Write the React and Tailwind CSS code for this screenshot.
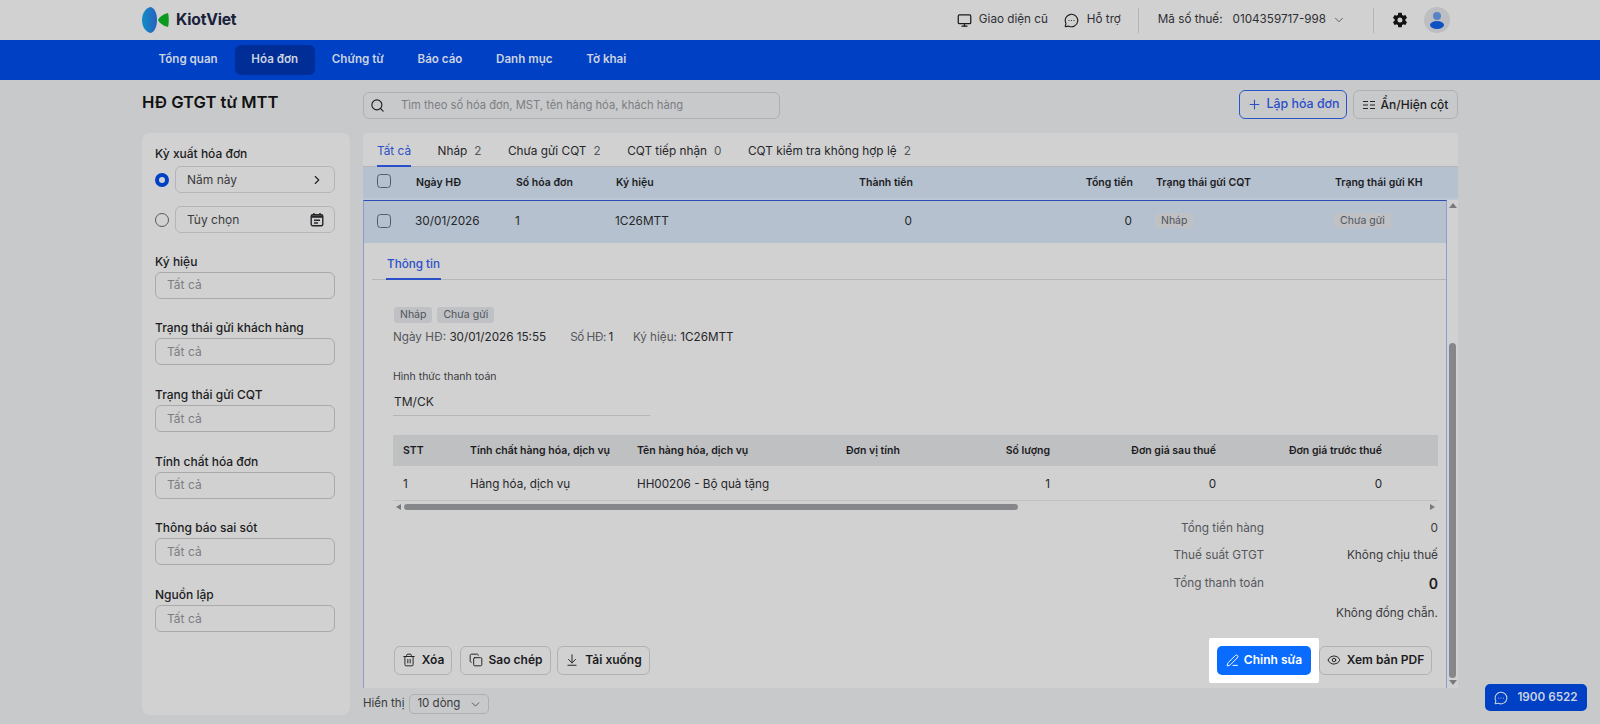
import { Monitor, MessageCircleMore, ChevronDown, ChevronRight, Search, Plus, Trash2, Copy, ArrowDownToLine, PenLine, Eye } from "lucide-react";
import { IoSettingsSharp } from "react-icons/io5";

const navItems = ["Tổng quan", "Hóa đơn", "Chứng từ", "Báo cáo", "Danh mục", "Tờ khai"];
const tabs = [
  { label: "Nháp", count: 2 },
  { label: "Chưa gửi CQT", count: 2 },
  { label: "CQT tiếp nhận", count: 0 },
  { label: "CQT kiểm tra không hợp lệ", count: 2 },
];
const filters = ["Ký hiệu", "Trạng thái gửi khách hàng", "Trạng thái gửi CQT", "Tính chất hóa đơn", "Thông báo sai sót", "Nguồn lập"];
const totals = [
  { label: "Tổng tiền hàng", value: "0" },
  { label: "Thuế suất GTGT", value: "Không chịu thuế" },
  { label: "Tổng thanh toán", value: "0", strong: true },
];

function Logo() {
  return (
    <svg width="28" height="28" viewBox="0 0 28 28" className="shrink-0">
      <defs>
        <linearGradient id="kv" x1="0" x2="1" y1="0" y2="0">
          <stop offset="0" stopColor="#0f8fc4" />
          <stop offset="1" stopColor="#2a5fc0" />
        </linearGradient>
      </defs>
      <path d="M9 1 C3 2 0 8 0 14 C0 20 3 26 9 27 C14 25 15 18 15 14 C15 10 14 3 9 1 Z" fill="url(#kv)" />
      <path d="M26 7 C27 10 27 18 26 21 C22 20 17 17 16 14 C17 11 22 8 26 7 Z" fill="#0a9a1e" />
    </svg>
  );
}

function ColumnsIcon() {
  return (
    <svg width="12" height="10" viewBox="0 0 12 10" fill="none" stroke="#26272a" strokeWidth="1">
      <path d="M0 1.5H5M7 1.5H12M0 5H5M7 5H12M0 8.5H5M7 8.5H12" />
    </svg>
  );
}

function CalendarIcon() {
  return (
    <svg width="14" height="15" viewBox="0 0 14 15" fill="none" stroke="#26272a" strokeWidth="1.4">
      <rect x="1.2" y="2.7" width="11.6" height="11" rx="1.5" />
      <path d="M1.2 4.6H12.8" strokeWidth="2.4" />
      <path d="M4 1V3M10 1V3M4 8.2H10M4 11H8" />
    </svg>
  );
}

function Checkbox() {
  return <span className="-mt-[3px] block h-[14px] w-[14px] rounded-[3.5px] border border-[#555b66]" />;
}

function Tag({ children, className = "" }) {
  return <span className={`rounded-[3px] bg-[#bfc1c4] px-[6px] py-[1px] text-[10.5px] leading-[14px] text-[#50545c] ${className}`}>{children}</span>;
}

function OutlineButton({ icon: Icon, children, className = "" }) {
  return (
    <button type="button" className={`flex h-[29px] items-center justify-center gap-[6px] rounded-[6px] border border-[#b0b1b3] text-[12px] font-semibold text-[#1c1c1e] ${className}`}>
      <Icon size={14} strokeWidth={1.6} />
      {children}
    </button>
  );
}

function Sidebar() {
  return (
    <aside className="flex h-[582px] w-[208px] shrink-0 flex-col rounded-[8px] bg-[#d1d1d1] pl-[13px] pr-[15px] pt-[14px]">
      <div className="text-[12px] font-medium leading-[14px] text-[#1c1c1e]">Kỳ xuất hóa đơn</div>
      <div className="mt-[5px] flex items-center gap-[6px]">
        <span className="h-[14px] w-[14px] rounded-full border-[4px] border-[#0040c4] bg-[#d1d1d1]" />
        <div className="flex h-[27px] flex-1 items-center justify-between rounded-[6px] border border-[#b4b5b7] pl-[11px] pr-[10px] text-[12px] text-[#3a3b3e]">
          Năm này
          <ChevronRight size={14} strokeWidth={2} className="text-[#26272a]" />
        </div>
      </div>
      <div className="mt-[13px] flex items-center gap-[6px]">
        <span className="h-[14px] w-[14px] rounded-full border border-[#55585e]" />
        <div className="flex h-[27px] flex-1 items-center justify-between rounded-[6px] border border-[#b4b5b7] pl-[11px] pr-[10px] text-[12px] text-[#3a3b3e]">
          Tùy chọn
          <CalendarIcon />
        </div>
      </div>
      <div className="-mt-[1px] flex flex-col">
        {filters.map((label) => (
          <div key={label} className="mt-[21.7px]">
            <div className="text-[12px] font-medium leading-[16px] text-[#1c1c1e]">{label}</div>
            <div className="mt-[2px] flex h-[27px] items-center rounded-[6px] border border-[#a9aaac] pl-[11px] text-[12px] text-[#7c7e83]">Tất cả</div>
          </div>
        ))}
      </div>
    </aside>
  );
}

function Tabs() {
  return (
    <div className="flex h-[34px] shrink-0 items-stretch gap-[26.5px] border-b border-[#b4b5b7] pl-[14px] text-[11.8px] leading-[36px] text-[#26272a]">
      <span className="-mb-px border-b-2 border-[#2a4fc8] text-[#2a4fc8]">Tất cả</span>
      {tabs.map((t) => (
        <span key={t.label} className="whitespace-nowrap">
          {t.label}
          <span className="ml-[7px] text-[#55575c]">{t.count}</span>
        </span>
      ))}
    </div>
  );
}

function InvoiceTable() {
  return (
    <div className="mt-[19px] w-[1045px]">
      <div className="grid h-[31px] grid-cols-[67px_167px_209px_89px_115px_166px_1fr] items-center bg-[#bfc0c2] pl-[10px] text-[10.5px] font-semibold text-[#1c1c1e]">
        <span>STT</span>
        <span>Tính chất hàng hóa, dịch vụ</span>
        <span>Tên hàng hóa, dịch vụ</span>
        <span>Đơn vị tính</span>
        <span className="text-right">Số lượng</span>
        <span className="text-right">Đơn giá sau thuế</span>
        <span className="pr-[56px] text-right">Đơn giá trước thuế</span>
      </div>
      <div className="grid h-[35px] grid-cols-[67px_167px_209px_89px_115px_166px_1fr] items-center border-b border-[#c0c1c3] pl-[10px] pt-[3px] text-[11.7px] text-[#26272a]">
        <span>1</span>
        <span>Hàng hóa, dịch vụ</span>
        <span>HH00206 - Bộ quà tặng</span>
        <span />
        <span className="text-right">1</span>
        <span className="text-right">0</span>
        <span className="pr-[56px] text-right">0</span>
      </div>
      <div className="mt-[2px] flex h-[7px] items-center gap-[3px] px-[3px]">
        <span className="h-0 w-0 border-y-[3px] border-r-[5px] border-y-transparent border-r-[#77797d]" />
        <div className="flex-1">
          <div className="h-[6px] w-[60%] rounded-[3px] bg-[#85878b]" />
        </div>
        <span className="h-0 w-0 border-y-[3px] border-l-[5px] border-y-transparent border-l-[#77797d]" />
      </div>
    </div>
  );
}

function Detail() {
  return (
    <div className="flex flex-1 flex-col">
      <div className="ml-[8px] h-[37px] border-b border-[#b4b5b7] pl-[14px]">
        <span className="inline-block h-[37px] border-b-2 border-[#2a4fc8] px-px text-[11.7px] font-medium leading-[42px] text-[#2a4fc8]">Thông tin</span>
      </div>
      <div className="flex flex-1 flex-col pl-[29px] pr-[9px]">
        <div className="mt-[27px] flex gap-[5px] pl-px">
          <Tag>Nháp</Tag>
          <Tag>Chưa gửi</Tag>
        </div>
        <div className="mt-[6px] flex text-[11.7px] leading-[16px] text-[#55575c]">
          <span className="mr-[24px]">Ngày HĐ: <span className="text-[#26272a]">30/01/2026 15:55</span></span>
          <span className="mr-[20px] tracking-[-0.5px]">Số HĐ: <span className="text-[#26272a]">1</span></span>
          <span>Ký hiệu: <span className="text-[#26272a]">1C26MTT</span></span>
        </div>
        <div className="mt-[25px] text-[10.5px] leading-[14px] text-[#3a3b3e]">Hình thức thanh toán</div>
        <div className="flex h-[32px] w-[257px] items-center border-b border-[#b4b5b7] pl-px pt-[5px] text-[12px] text-[#26272a]">TM/CK</div>
        <InvoiceTable />
        <div className="mt-[5px] flex w-[1045px] flex-col">
          {totals.map((t) => (
            <div key={t.label} className="grid h-[27.5px] grid-cols-[871px_1fr] items-center text-[11.8px] text-[#55575c]">
              <span className="text-right">{t.label}</span>
              <span className={`text-right ${t.strong ? "text-[14px] font-semibold text-[#1c1c1e]" : "text-[#3a3b3e]"}`}>{t.value}</span>
            </div>
          ))}
          <div className="mt-[1px] h-[28px] text-right text-[11.8px] leading-[28px] text-[#3a3b3e]">Không đồng chẵn.</div>
        </div>
        <div className="mt-[11px] flex w-[1045px] items-center gap-[6px]">
          <OutlineButton icon={Trash2} className="ml-px w-[58px]">Xóa</OutlineButton>
          <OutlineButton icon={Copy} className="ml-[2px] w-[91px]">Sao chép</OutlineButton>
          <OutlineButton icon={ArrowDownToLine} className="w-[93px]">Tải xuống</OutlineButton>
          <div className="ml-auto mr-[6px] flex items-center">
            <div className="rounded-[2px] bg-white px-[8px] py-[8px]">
              <button type="button" className="flex h-[29px] w-[94px] items-center justify-center gap-[5px] rounded-[5px] bg-[#0a6cff] text-[12px] font-semibold text-white">
                <PenLine size={13} strokeWidth={1.8} />
                Chỉnh sửa
              </button>
            </div>
            <OutlineButton icon={Eye} className="w-[113px]">Xem bản PDF</OutlineButton>
          </div>
        </div>
      </div>
    </div>
  );
}

function MainPanel() {
  return (
    <div className="flex h-[555px] flex-col rounded-t-[4px] bg-[#d1d1d1]">
      <Tabs />
      <div className="grid h-[31px] shrink-0 grid-cols-[39px_100px_100px_120px_177px_220px_202px_1fr] items-center bg-[#b5c1cf] pl-[14px] text-[10.5px] font-semibold text-[#1c1c1e]">
        <Checkbox />
        <span>Ngày HĐ</span>
        <span>Số hóa đơn</span>
        <span>Ký hiệu</span>
        <span className="text-right">Thành tiền</span>
        <span className="text-right">Tổng tiền</span>
        <span className="pl-[23px]">Trạng thái gửi CQT</span>
        <span>Trạng thái gửi KH</span>
      </div>
      <div className="h-[2px] shrink-0 bg-[#bcc8d6]" />
      <div className="flex min-h-0 flex-1">
        <div className="flex min-w-0 flex-1 flex-col border-x border-t border-x-[#8e9bd0] border-t-[#2c4cb4]">
          <div className="grid h-[42px] shrink-0 grid-cols-[38px_100px_100px_120px_177px_220px_202px_1fr] items-center bg-[#b5c1cf] pl-[13px] text-[11.8px] text-[#26272a]">
            <Checkbox />
            <span>30/01/2026</span>
            <span>1</span>
            <span>1C26MTT</span>
            <span className="text-right">0</span>
            <span className="text-right">0</span>
            <span className="-mt-[2px] pl-[23px]"><Tag>Nháp</Tag></span>
            <span className="-mt-[2px]"><Tag>Chưa gửi</Tag></span>
          </div>
          <Detail />
        </div>
        <div className="flex w-[11px] shrink-0 flex-col items-center justify-between py-[3px]">
          <span className="h-0 w-0 border-x-[4px] border-b-[5px] border-x-transparent border-b-[#77797d]" />
          <div className="mb-[2px] mt-[135px] w-[7px] flex-1 rounded-[4px] bg-[#85878b]" />
          <span className="h-0 w-0 border-x-[4px] border-t-[5px] border-x-transparent border-t-[#77797d]" />
        </div>
      </div>
    </div>
  );
}

export default function App() {
  return (
    <div className="relative h-[724px] w-[1600px] overflow-hidden bg-[#c8c9cb] font-['Inter','Noto_Sans',sans-serif]">
      <header className="flex h-[40px] items-center bg-[#d1d1d1] pl-[142px] pr-[150px]">
        <Logo />
        <span className="ml-[6px] text-[15.7px] font-bold tracking-[-0.2px] text-[#17213a]">KiotViet</span>
        <div className="ml-auto flex items-center text-[11.7px] text-[#2e2f33]">
          <Monitor size={15} strokeWidth={2} className="text-[#1c1c1e]" />
          <span className="ml-[7px]">Giao diện cũ</span>
          <MessageCircleMore size={15} strokeWidth={1.8} className="ml-[16px] text-[#1c1c1e]" />
          <span className="ml-[8px]">Hỗ trợ</span>
          <span className="ml-[17px] h-[25px] w-px bg-[#b4b5b7]" />
          <span className="ml-[19px]">Mã số thuế:</span>
          <span className="ml-[10px]">0104359717-998</span>
          <ChevronDown size={14} strokeWidth={1.2} className="ml-[6px]" />
          <span className="ml-[27px] h-[25px] w-px bg-[#b4b5b7]" />
          <IoSettingsSharp size={16} className="ml-[18px] text-[#111]" />
          <span className="ml-[16px] flex h-[26px] w-[26px] items-center justify-center rounded-full bg-[#bcbec2]">
            <svg width="16" height="18" viewBox="0 0 16 18">
              <circle cx="8" cy="5" r="4" fill="#5a82c6" />
              <ellipse cx="8" cy="14" rx="7" ry="4" fill="#0d52c2" />
            </svg>
          </span>
        </div>
      </header>

      <nav className="flex h-[40px] items-center gap-[0.7px] bg-[#0040c4] pl-[142px]">
        {navItems.map((item) => (
          <span key={item} className={`flex h-[30px] items-center rounded-[6px] px-[16.5px] text-[11.6px] font-semibold text-[#ccd3e2] ${item === "Hóa đơn" ? "bg-[#002d96]" : ""}`}>
            {item}
          </span>
        ))}
      </nav>

      <div className="flex gap-[13px] px-[142px]">
        <div className="w-[208px] shrink-0">
          <h1 className="mt-[11px] h-[42px] text-[16.6px] font-semibold leading-[22px] text-[#111]">HĐ GTGT từ MTT</h1>
          <Sidebar />
        </div>
        <div className="flex min-w-0 flex-1 flex-col">
          <div className="flex h-[53px] items-start pt-[10px]">
            <div className="mt-[2px] flex h-[27px] w-[417px] items-center rounded-[6px] border border-[#aeafb1] pl-[6px] text-[11.2px] text-[#7c7e83]">
              <Search size={15} strokeWidth={1.8} className="text-[#1c1c1e]" />
              <span className="ml-[16px]">Tìm theo số hóa đơn, MST, tên hàng hóa, khách hàng</span>
            </div>
            <button type="button" className="ml-auto flex h-[29px] w-[108px] items-center justify-center gap-[5px] rounded-[6px] border border-[#2a55c8] text-[12.4px] font-medium text-[#2a4fc8]">
              <Plus size={15} strokeWidth={1.7} />
              Lập hóa đơn
            </button>
            <button type="button" className="ml-[6px] flex h-[29px] w-[105px] items-center justify-center gap-[6px] rounded-[6px] border border-[#b0b1b3] text-[12px] font-medium text-[#1c1c1e]">
              <ColumnsIcon />
              Ẩn/Hiện cột
            </button>
          </div>
          <MainPanel />
          <div className="flex h-[26px] items-center gap-[5px] pt-[6px] text-[11.5px] text-[#3a3b3e]">
            Hiển thị
            <div className="flex h-[20px] w-[80px] items-center justify-between rounded-[5px] border border-[#aeafb1] pl-[7px] pr-[6px]">
              10 dòng
              <ChevronDown size={13} strokeWidth={1.4} />
            </div>
          </div>
        </div>
      </div>

      <div className="absolute bottom-[13px] right-[13px] flex h-[27px] w-[102px] items-center justify-center gap-[9px] rounded-[5px] bg-[#0040c4] text-[11.7px] font-semibold text-[#ccd3e2]">
        <MessageCircleMore size={14} strokeWidth={1.8} />
        1900 6522
      </div>
    </div>
  );
}
